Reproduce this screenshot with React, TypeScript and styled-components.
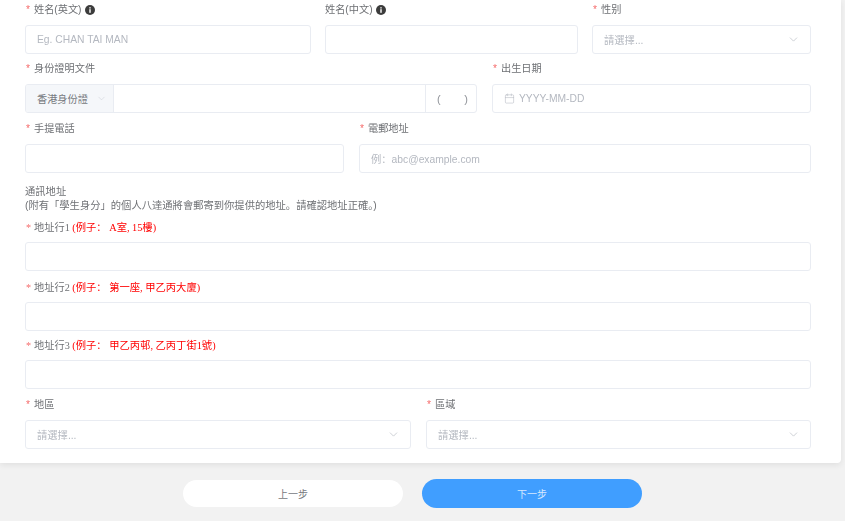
import React from "react";
import styled, { createGlobalStyle } from "styled-components";
import { ChevronDown, Calendar } from "lucide-react";

const GlobalStyle = createGlobalStyle`
  html, body {
    margin: 0;
    padding: 0;
    height: 521px;
    overflow: hidden;
    background: #f2f2f2;
    font-family: "Liberation Sans", "Noto Sans CJK SC", sans-serif;
  }
`;

const Page = styled.div`
  width: 845px;
  height: 521px;
  filter: blur(0.6px);
`;

const Card = styled.div`
  width: 841px;
  height: 463px;
  box-sizing: border-box;
  padding: 0 30px 0 25px;
  background: #fff;
  border-radius: 0 0 4px 0;
  box-shadow: 0 2px 6px rgba(0, 0, 0, 0.08);
`;

const Row = styled.div<{ $top: number; $gap?: number }>`
  display: flex;
  gap: ${(p) => p.$gap ?? 15}px;
  padding-top: ${(p) => p.$top}px;
`;

const Field = styled.div<{ $width: number }>`
  flex: 0 0 ${(p) => p.$width}px;
  width: ${(p) => p.$width}px;
`;

const Label = styled.div<{ $required?: boolean }>`
  height: 17px;
  padding-top: 1px;
  margin-bottom: 7px;
  display: flex;
  align-items: center;
  font-size: 10.2px;
  line-height: 17px;
  color: #6e7074;
  white-space: pre;
  &::before {
    content: ${(p) => (p.$required ? '"*"' : "none")};
    color: #f56c6c;
    margin: 0 4px 0 1px;
  }
`;

const Box = styled.div`
  height: 29px;
  box-sizing: border-box;
  display: flex;
  align-items: center;
  padding: 0 11px;
  background: #fff;
  border: 1px solid #e9ecf2;
  border-radius: 3px;
  font-size: 10.3px;
  color: #b4b8c0;
`;

const SelectBox = styled(Box)`
  justify-content: space-between;
  padding-right: 10px;
`;

const DateBox = styled(Box)`
  gap: 4px;
`;

const Group = styled.div`
  height: 29px;
  box-sizing: border-box;
  display: flex;
  border: 1px solid #e9ecf2;
  border-radius: 3px;
  overflow: hidden;
`;

const Prefix = styled.div`
  width: 88px;
  box-sizing: border-box;
  display: flex;
  align-items: center;
  gap: 8px;
  padding-left: 11px;
  background: #f5f7fa;
  border-right: 1px solid #e9ecf2;
  font-size: 10.2px;
  color: #777a80;
`;

const GroupInput = styled.div`
  flex: 1;
`;

const Suffix = styled.div`
  width: 51px;
  box-sizing: border-box;
  display: flex;
  align-items: center;
  justify-content: space-between;
  padding: 0 8px 0 11px;
  border-left: 1px solid #e9ecf2;
  font-size: 11px;
  color: #909399;
`;

const Info = styled.svg`
  width: 10px;
  height: 10px;
  margin-left: 3px;
`;

const Note = styled.div`
  padding-top: 12px;
  font-size: 10.3px;
  line-height: 14px;
  color: #6e7074;
`;

const SerifLabel = styled(Label)`
  font-family: "Liberation Serif", "Noto Sans CJK SC", serif;
  height: 16px;
  padding-top: 2px;
  margin-bottom: 7px;
  &::before {
    margin-right: 3px;
  }
`;

const Example = styled.span`
  color: #f00;
  font-size: 10.3px;
`;

const Footer = styled.div`
  display: flex;
  align-items: center;
  justify-content: center;
  gap: 19px;
  height: 60px;
  padding-right: 20px;
`;

const StepButton = styled.div<{ $primary?: boolean }>`
  width: 220px;
  height: ${(p) => (p.$primary ? 29 : 27)}px;
  display: flex;
  align-items: center;
  justify-content: center;
  border-radius: 15px;
  font-size: 10px;
  background: ${(p) => (p.$primary ? "#409eff" : "#fff")};
  color: ${(p) => (p.$primary ? "#d6e9ff" : "#777a80")};
`;

const InfoIcon = () => (
  <Info viewBox="0 0 10 10">
    <circle cx="5" cy="5" r="5" fill="#3c3c3c" />
    <rect x="4.3" y="4.2" width="1.4" height="3.6" fill="#fff" />
    <rect x="4.3" y="2.2" width="1.4" height="1.3" fill="#fff" />
  </Info>
);

const Select = ({ text }: { text: string }) => (
  <SelectBox>
    {text}
    <ChevronDown size={13} strokeWidth={1.2} color="#b4b8c0" />
  </SelectBox>
);

const App = () => {
  return (
    <Page>
      <GlobalStyle />
      <Card>
        <Row $top={0} $gap={14}>
          <Field $width={286}>
            <Label $required>姓名(英文)<InfoIcon /></Label>
            <Box>Eg. CHAN TAI MAN</Box>
          </Field>
          <Field $width={253}>
            <Label>姓名(中文)<InfoIcon /></Label>
            <Box />
          </Field>
          <Field $width={219}>
            <Label $required>性别</Label>
            <Select text="請選擇..." />
          </Field>
        </Row>

        <Row $top={5}>
          <Field $width={452}>
            <Label $required>身份證明文件</Label>
            <Group>
              <Prefix>
                香港身份證
                <ChevronDown size={11} strokeWidth={1} color="#c4c8d0" />
              </Prefix>
              <GroupInput />
              <Suffix><span>(</span><span>)</span></Suffix>
            </Group>
          </Field>
          <Field $width={319}>
            <Label $required>出生日期</Label>
            <DateBox>
              <Calendar size={11} strokeWidth={1.2} color="#b4b8c0" />
              YYYY-MM-DD
            </DateBox>
          </Field>
        </Row>

        <Row $top={6}>
          <Field $width={319}>
            <Label $required>手提電話</Label>
            <Box />
          </Field>
          <Field $width={452}>
            <Label $required>電郵地址</Label>
            <Box>例：abc@example.com</Box>
          </Field>
        </Row>

        <Note>
          通訊地址
          <br />
          (附有「學生身分」的個人八達通將會郵寄到你提供的地址。請確認地址正確。)
        </Note>

        <Row $top={4}>
          <Field $width={786}>
            <SerifLabel $required>
              地址行1 <Example>(例子： A室, 15樓)</Example>
            </SerifLabel>
            <Box />
          </Field>
        </Row>
        <Row $top={6}>
          <Field $width={786}>
            <SerifLabel $required>
              地址行2 <Example>(例子： 第一座, 甲乙丙大廈)</Example>
            </SerifLabel>
            <Box />
          </Field>
        </Row>
        <Row $top={4}>
          <Field $width={786}>
            <SerifLabel $required>
              地址行3 <Example>(例子： 甲乙丙邨, 乙丙丁街1號)</Example>
            </SerifLabel>
            <Box />
          </Field>
        </Row>

        <Row $top={6}>
          <Field $width={386}>
            <Label $required>地區</Label>
            <Select text="請選擇..." />
          </Field>
          <Field $width={385}>
            <Label $required>區域</Label>
            <Select text="請選擇..." />
          </Field>
        </Row>
      </Card>

      <Footer>
        <StepButton>上一步</StepButton>
        <StepButton $primary>下一步</StepButton>
      </Footer>
    </Page>
  );
};

export default App;
